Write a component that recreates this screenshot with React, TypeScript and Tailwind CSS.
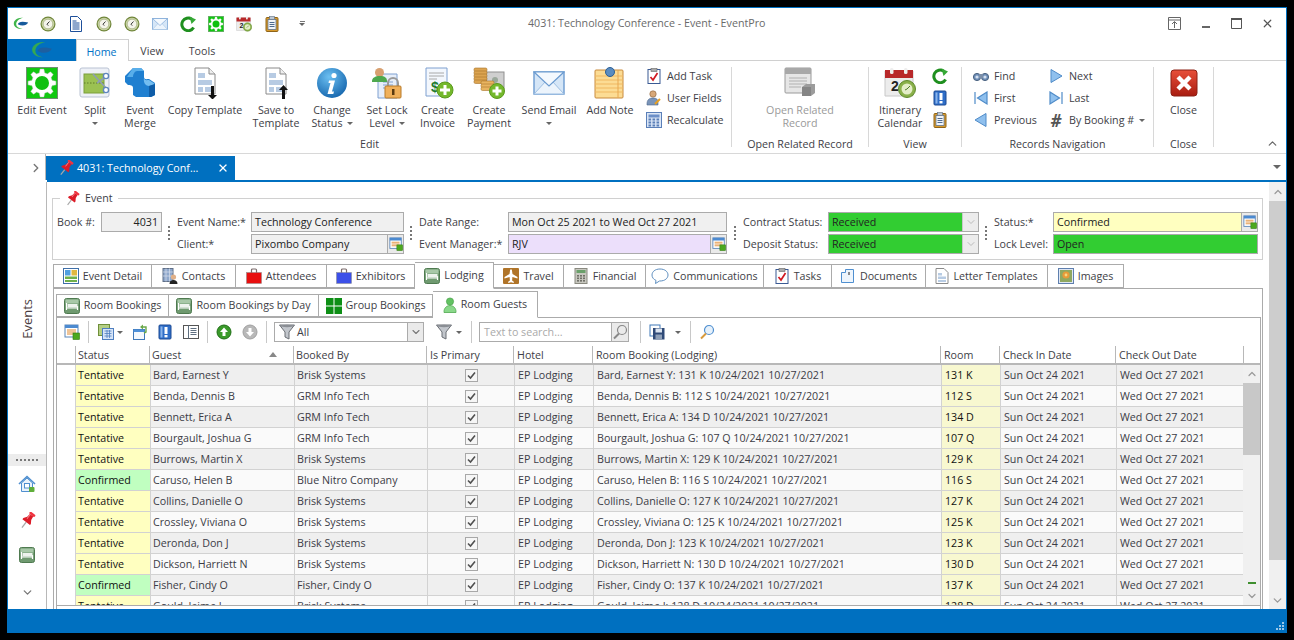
import type { ReactNode } from 'react';
import { ChevronDown, ChevronUp, ChevronRight, X } from 'lucide-react';

type IconProps = { size?: number; className?: string };

function gearPath(cx: number, cy: number, outer: number, inner: number, teeth: number) {
  const pts: string[] = [];
  const step = (Math.PI * 2) / teeth;
  for (let i = 0; i < teeth; i++) {
    const a = i * step;
    const corners: [number, number][] = [
      [a - step * 0.32, inner],
      [a - step * 0.17, outer],
      [a + step * 0.17, outer],
      [a + step * 0.32, inner],
    ];
    corners.forEach(([t, r]) => pts.push(`${(cx + Math.cos(t) * r).toFixed(2)},${(cy + Math.sin(t) * r).toFixed(2)}`));
  }
  return `M${pts.join('L')}Z`;
}

/* ---- drawn icons ---- */
const Logo = ({ size = 16, dim }: IconProps & { dim?: boolean }) => (
  <svg width={size} height={size * 0.8} viewBox="0 0 20 16">
    <path d="M13 1C6 0 1 4 1 8c0 4 4 7 11 7-5-1-8-3-8-6 0-4 4-7 9-8z" fill={dim ? '#35a853' : '#3fb54a'} />
    <path d="M6 9c1-3 5-4 13-2-2 4-8 5-13 2z" fill={dim ? '#1d5fa0' : '#155a9c'} />
  </svg>
);
const Clock = ({ size = 16 }: IconProps) => (
  <svg width={size} height={size} viewBox="0 0 16 16">
    <circle cx="8" cy="8" r="7.5" fill="#70863a" />
    <circle cx="8" cy="8" r="6.3" fill="#c9d3a6" />
    <circle cx="8" cy="8" r="4.8" fill="#f4f4ec" stroke="#8a9a5e" strokeWidth=".5" />
    <path d="M9.5 5.5 7 8.2l1.2 1.4" fill="none" stroke="#333" strokeWidth="1" />
  </svg>
);
const DocBlue = ({ size = 16 }: IconProps) => (
  <svg width={size} height={size} viewBox="0 0 16 16">
    <path d="M2.5.5h7l4 4v11h-11z" fill="#fff" stroke="#1d4f9a" />
    <path d="M4.5 5h4M4.5 7h7M4.5 9h7M4.5 11h7M4.5 13h7" stroke="#1d4f9a" />
  </svg>
);
const Mail = ({ size = 16 }: IconProps) => (
  <svg width={size} height={size} viewBox="0 0 32 32">
    <path d="M1 5h30v22H1z" fill="#d5e6f7" stroke="#6b9bd0" strokeWidth="1.4" />
    <path d="M1 27 13 14h6l12 13z" fill="#ecf4fc" stroke="#9dbfe3" />
    <path d="M1 5l15 14L31 5z" fill="#f4f9fe" stroke="#6b9bd0" strokeWidth="1.2" />
  </svg>
);
const Refresh = ({ size = 16 }: IconProps) => (
  <svg width={size} height={size} viewBox="0 0 16 16">
    <path d="M13.6 11.5A6.3 6.3 0 1 1 11.5 3" fill="none" stroke="#1f8f1f" strokeWidth="3" />
    <path d="M9.5 0.5 16 3.5l-4.5 4.5z" fill="#35a835" />
  </svg>
);
const GearBox = ({ size = 16 }: IconProps) => (
  <svg width={size} height={size} viewBox="0 0 32 32">
    <rect x=".5" y=".5" width="31" height="31" fill="#10c810" stroke="#6f8f6f" />
    <path d={gearPath(16, 16, 14, 10.5, 8)} fill="#fff" stroke="#cfcfcf" strokeWidth=".5" />
    <circle cx="16" cy="16" r="7" fill="#10c010" />
  </svg>
);
const CalIcon = ({ size = 32 }: IconProps) => (
  <svg width={size} height={size} viewBox="0 0 32 32" fontFamily="'Liberation Sans',sans-serif">
    <path d="M1 4h28v25H1z" fill="#ececec" stroke="#c8c8c8" />
    <path d="M1 3h28v8H1z" fill="#b8282a" />
    <rect x="6" y="1" width="3.5" height="6" rx="1.5" fill="#eee" />
    <rect x="20" y="1" width="3.5" height="6" rx="1.5" fill="#eee" />
    <text x="7" y="24" fontSize="14" fontWeight="700" fill="#222">2</text>
    <circle cx="23" cy="22" r="8.5" fill="#8ab04a" stroke="#5f8a2c" />
    <circle cx="23" cy="22" r="5.5" fill="#e4edc8" />
    <path d="M26 19l-3 3-2 1" stroke="#4f7a2c" fill="none" />
  </svg>
);
const Clipboard = ({ size = 16 }: IconProps) => (
  <svg width={size} height={size} viewBox="0 0 16 16">
    <rect x="2" y="1.5" width="12" height="14" rx="1" fill="#d89a2c" stroke="#8f6418" />
    <rect x="4" y="3.5" width="8" height="10" fill="#f1f4f8" stroke="#4d6a8f" strokeWidth=".7" />
    <rect x="5.5" y=".5" width="5" height="3" fill="#bcc7d4" stroke="#5f6f80" strokeWidth=".6" />
    <path d="M5.5 6.5h5M5.5 8.5h5M5.5 10.5h5" stroke="#4d6a8f" />
  </svg>
);
const Pin = ({ size = 16 }: IconProps) => (
  <svg width={size} height={size} viewBox="0 0 16 16">
    <g transform="rotate(38 8 8)">
      <path d="M8 10v6.5" stroke="#a8a8a8" strokeWidth="1.2" />
      <rect x="4.8" y="-.6" width="6.4" height="2.4" rx="1" fill="#f03440" />
      <path d="M6 1.8h4l.4 3.6 2.1 3.2V10h-9V8.6l2.1-3.2z" fill="#dc1c28" />
      <path d="M6.6 2v5" stroke="#f6868c" strokeWidth=".9" />
    </g>
  </svg>
);
const Bed = ({ size = 16 }: IconProps) => (
  <svg width={size} height={size} viewBox="0 0 16 16">
    <rect x=".5" y=".5" width="15" height="15" rx="2" fill="#6f9a70" stroke="#4f7a50" />
    <rect x="1.5" y="1.5" width="13" height="4" fill="#a8c8a8" />
    <path d="M2.5 5v7M13.5 8v4M2.5 10h11" stroke="#fff" strokeWidth="1.2" />
    <rect x="3.5" y="6" width="10" height="3.5" fill="#eef3ee" />
  </svg>
);
const SelectBox = ({ size = 16 }: IconProps) => (
  <svg width={size} height={size} viewBox="0 0 16 16">
    <rect x="1" y="1" width="13" height="12" fill="#fff" stroke="#5b86b8" />
    <rect x="1" y="1" width="13" height="3" fill="#4c8ad0" />
    <path d="M3 6h9M3 8h9M3 10h6" stroke="#e08a30" />
    <rect x="9" y="9" width="6.5" height="6.5" fill="#4ca81e" stroke="#2f7a10" strokeWidth=".6" />
  </svg>
);
const Split = () => (
  <svg width="32" height="32" viewBox="0 0 32 32">
    <rect x="1" y="1" width="29" height="29" rx="2" fill="#eef1f7" stroke="#b9c2d3" />
    <rect x="5" y="7" width="20" height="19" fill="#9bc152" stroke="#7b9f3a" />
    <path d="M5 16h20" stroke="#5e7d2a" strokeDasharray="1.5 1.5" />
    <path d="M14 7l14 15M28 9 18 16" stroke="#8d9db5" strokeWidth="1.6" />
    <circle cx="27" cy="9" r="2.6" fill="#fff" stroke="#5f86bd" strokeWidth="1.4" />
    <circle cx="27" cy="23" r="2.6" fill="#fff" stroke="#5f86bd" strokeWidth="1.4" />
  </svg>
);
const Merge = () => (
  <svg width="32" height="32" viewBox="0 0 32 32">
    <path d="M1 9 9 1h8l3 3v6c0 3 3 2 5 2l6 4v12l-4 2H12l-3-2v-7c0-3-3-3-5-3l-3-3z" fill="#1f7fd0" />
    <path d="M9 1h8l3 3H13c-2 0-4 3-4 6H3z" fill="#58aeea" />
    <path d="M20 11c1 3 3 2 5 2l6 4-6 2c-3 0-6-3-5-8z" fill="#74bdf0" />
    <path d="M25 19l6-2v11l-4 2h-2z" fill="#0f5da8" />
  </svg>
);
const Template = ({ dir }: { dir: 'down' | 'up' }) => (
  <svg width="32" height="32" viewBox="0 0 32 32">
    <path d="M6 1h14l6 6v20H6z" fill="#fff" stroke="#8a8a8a" />
    <path d="M20 1v6h6" fill="#eee" stroke="#8a8a8a" />
    <path d="M9 6h7v5H9zM9 13h14v5H9zM9 20h5v5H9zM16 20h7v5h-7z" fill="#b7cbe3" />
    {dir === 'down' ? (
      <path d="M22 19h3v9h3l-4.5 4.5L19 28h3z" fill="#111" />
    ) : (
      <path d="M22 32h3v-9h3l-4.5-5-4.5 5h3z" fill="#111" />
    )}
  </svg>
);
const Info = () => (
  <svg width="32" height="32" viewBox="0 0 32 32">
    <defs>
      <radialGradient id="ig" cx=".4" cy=".3" r=".8">
        <stop offset="0" stopColor="#6cc0f2" />
        <stop offset="1" stopColor="#0f5fa8" />
      </radialGradient>
    </defs>
    <circle cx="16" cy="16" r="15" fill="url(#ig)" />
    <circle cx="18" cy="8.5" r="2.6" fill="#fff" />
    <path d="M13 13.5h6l-3 11h2l-.7 2.5h-5.8l3-11h-2z" fill="#fff" />
  </svg>
);
const LockUser = () => (
  <svg width="32" height="32" viewBox="0 0 32 32">
    <path d="M7 7h19v24H7z" fill="#e6eefa" stroke="#7fa0d0" />
    <path d="M12 15h10M12 18h10M12 21h6" stroke="#7fa0d0" />
    <circle cx="8.5" cy="5.5" r="4.5" fill="#d8a070" />
    <path d="M1 14c0-3 3-5 8-5s7 2 7 5v1H1z" fill="#4ea84e" />
    <path d="M17 20v-4a5 5 0 0 1 10 0v4" fill="none" stroke="#9a9a9a" strokeWidth="2" />
    <rect x="14" y="19" width="16" height="12" rx="1" fill="#f0b05a" stroke="#b87a28" />
    <rect x="21" y="22" width="2.5" height="6" fill="#5a3a10" />
  </svg>
);
const Invoice = () => (
  <svg width="32" height="32" viewBox="0 0 32 32">
    <path d="M4 1h21v28H4z" fill="#f3f7fd" stroke="#7fa0d0" />
    <path d="M7 6h15M7 9h15M7 12h8" stroke="#a8a8a8" />
    <text x="9" y="25" fontSize="14" fontWeight="700" fill="#1c7a30" fontFamily="'Liberation Sans',sans-serif">$</text>
    <circle cx="23" cy="23" r="8" fill="#74b82c" stroke="#5a9a1c" />
    <path d="M23 18v10M18 23h10" stroke="#fff" strokeWidth="3" />
  </svg>
);
const Payment = () => (
  <svg width="32" height="32" viewBox="0 0 32 32">
    <rect x="13" y="5" width="18" height="17" fill="#cfcfcf" stroke="#8f8f8f" />
    <circle cx="22" cy="13" r="3" fill="#9aa89a" />
    {[3, 6, 9, 12, 15].map((y) => (
      <rect key={y} x="1" y={y - 2} width="13" height="3.5" rx="1.4" fill="#dca450" stroke="#a8742a" strokeWidth=".6" />
    ))}
    {[14, 17, 20].map((y) => (
      <rect key={y} x="8" y={y} width="13" height="3.5" rx="1.4" fill="#e8b460" stroke="#a8742a" strokeWidth=".6" />
    ))}
    <circle cx="24" cy="24" r="7.5" fill="#74b82c" stroke="#5a9a1c" />
    <path d="M24 19.5v9M19.5 24h9" stroke="#fff" strokeWidth="3" />
  </svg>
);
const Note = () => (
  <svg width="32" height="32" viewBox="0 0 32 32">
    <rect x="1" y="3" width="28" height="28" rx="1" fill="#fcdc94" stroke="#c88a3c" />
    <path d="M1 9h28M1 13h28M1 17h28M1 21h28M1 25h28" stroke="#f0b860" />
    <path d="M24 3v28" stroke="#e8a850" />
    <circle cx="16" cy="5" r="4.5" fill="#5a8cc0" stroke="#2c5f94" />
  </svg>
);
const Task = ({ size = 16 }: IconProps) => (
  <svg width={size} height={size} viewBox="0 0 16 16">
    <rect x="2" y="1.5" width="12" height="14" fill="#fff" stroke="#3a5a94" />
    <rect x="5" y=".5" width="6" height="3" fill="#aaa" stroke="#666" strokeWidth=".6" />
    <path d="M4.5 9l2.5 3 4.5-7" fill="none" stroke="#d01820" strokeWidth="1.7" />
  </svg>
);
const UserFields = () => (
  <svg width="16" height="16" viewBox="0 0 16 16">
    <circle cx="7" cy="4" r="3.2" fill="#d8a878" stroke="#8a6038" strokeWidth=".6" />
    <path d="M1 14c0-4 2-6 6-6s5 2 5 4v3H1z" fill="#7a94b8" stroke="#4a648c" strokeWidth=".6" />
    <path d="M9 14l5-5" stroke="#e8a020" strokeWidth="2" />
  </svg>
);
const Calc = ({ size = 16 }: IconProps) => (
  <svg width={size} height={size} viewBox="0 0 16 16">
    <rect x=".5" y=".5" width="15" height="15" fill="#dbe6f6" stroke="#5a7fb8" />
    <rect x="2.5" y="2.5" width="11" height="3" fill="#6c8fc8" />
    {[7, 10, 13].flatMap((y) =>
      [3, 7, 11].map((x) => <rect key={`${x}-${y}`} x={x - 0.5} y={y - 0.5} width="2.6" height="2" fill="#5a7fb8" />)
    )}
  </svg>
);
const RelatedRecord = () => (
  <svg width="32" height="32" viewBox="0 0 32 32">
    <rect x="1" y="1" width="26" height="25" rx="1" fill="#e6e6e6" stroke="#9a9a9a" />
    <rect x="1" y="1" width="26" height="6" fill="#a8a8a8" />
    <path d="M5 11h18M5 14h18M5 17h18M5 20h12" stroke="#b0b0b0" />
    <path d="M18 20l4-3h9v9l-4 3h-9z" fill="#9c9c9c" />
    <path d="M18 20h9v9h-9z" fill="#858585" />
  </svg>
);
const Book = ({ size = 16 }: IconProps) => (
  <svg width={size} height={size} viewBox="0 0 16 16">
    <rect x="2" y="1" width="12" height="14" rx="1" fill="#2f6ec8" stroke="#1c4a94" />
    <rect x="3.5" y="2.5" width="2" height="11" fill="#8ab4ea" />
    <rect x="7.5" y="3" width="3" height="7" fill="#fff" />
    <rect x="7.5" y="11" width="3" height="2.4" fill="#fff" />
  </svg>
);
const Binoc = () => (
  <svg width="16" height="16" viewBox="0 0 16 16">
    <circle cx="4" cy="9" r="3.6" fill="#6f8fb8" stroke="#49617f" />
    <circle cx="12" cy="9" r="3.6" fill="#6f8fb8" stroke="#49617f" />
    <rect x="6" y="6" width="4" height="4" fill="#7b8ea8" />
    <circle cx="4" cy="9" r="1.6" fill="#d5e0ef" />
    <circle cx="12" cy="9" r="1.6" fill="#d5e0ef" />
  </svg>
);
const Nav = ({ kind }: { kind: 'next' | 'prev' | 'first' | 'last' }) => (
  <svg width="16" height="16" viewBox="0 0 16 16">
    {kind === 'next' && <path d="M3 1.5 14 8 3 14.5z" fill="#8fc0ee" stroke="#4f8bc8" />}
    {kind === 'prev' && <path d="M13 1.5 2 8l11 6.5z" fill="#8fc0ee" stroke="#4f8bc8" />}
    {kind === 'first' && <path d="M2 2v12M14 2 4.5 8 14 14z" fill="#8fc0ee" stroke="#4f8bc8" strokeWidth="1.2" />}
    {kind === 'last' && <path d="M14 2v12M2 2l9.5 6L2 14z" fill="#8fc0ee" stroke="#4f8bc8" strokeWidth="1.2" />}
  </svg>
);
const CloseRed = () => (
  <svg width="32" height="32" viewBox="0 0 32 32">
    <defs>
      <linearGradient id="cr" x1="0" y1="0" x2="0" y2="1">
        <stop offset="0" stopColor="#e8503a" />
        <stop offset="1" stopColor="#a81c10" />
      </linearGradient>
    </defs>
    <rect x="3" y="3" width="26" height="26" rx="3" fill="url(#cr)" stroke="#8c2014" />
    <path d="M10 10l12 12M22 10 10 22" stroke="#fff" strokeWidth="4.4" />
  </svg>
);
const EventDetail = () => (
  <svg width="16" height="16" viewBox="0 0 16 16">
    <rect x=".5" y=".5" width="15" height="15" fill="#fff" stroke="#3f6fa8" />
    <rect x="2" y="2" width="5.5" height="5.5" fill="#4f9fe0" />
    <rect x="8.5" y="2" width="5.5" height="5.5" fill="#e0b840" />
    <rect x="2" y="8.5" width="12" height="2.5" fill="#6fb04a" />
    <rect x="2" y="12" width="12" height="2" fill="#6fb04a" />
  </svg>
);
const Contacts = () => (
  <svg width="16" height="16" viewBox="0 0 16 16">
    <rect x="1" y="0.5" width="10" height="13" fill="#8fa8cc" stroke="#5f6f88" />
    <path d="M4 .5v13M7.5 .5v13M1 4h10M1 8h10" stroke="#d8e0ec" strokeWidth=".7" />
    <circle cx="11.5" cy="9" r="2.6" fill="#e0b088" />
    <path d="M7.5 16c0-3 2-4 4-4s4 1 4 4z" fill="#222" />
  </svg>
);
const Badge = ({ color }: { color: string }) => (
  <svg width="16" height="16" viewBox="0 0 16 16">
    <rect x="5.5" y="1" width="5" height="5" rx="1" fill="none" stroke="#7a6a6a" strokeWidth="1.2" />
    <rect x="0.5" y="4.5" width="15" height="11" fill={color} stroke="#8a8a8a" strokeWidth=".5" />
  </svg>
);
const Plane = () => (
  <svg width="16" height="16" viewBox="0 0 16 16">
    <rect width="16" height="16" rx="1" fill="#b07428" />
    <path d="M7.2 1.5h1.6l.7 4.5 5 3v1.5L9.4 9l-.3 3.5 1.7 1.2V15L8 14.3 5.2 15v-1.3l1.7-1.2L6.6 9l-5.1 1.5V9l5-3z" fill="#fff" />
  </svg>
);
const Financial = () => (
  <svg width="16" height="16" viewBox="0 0 16 16">
    <rect x="2" y=".5" width="12" height="15" fill="#c8c8c0" stroke="#8a8a80" />
    <rect x="3.5" y="2" width="9" height="3" fill="#6aa06a" />
    {[7, 9.5, 12].flatMap((y) => [4, 7, 10].map((x) => <rect key={`${x}${y}`} x={x} y={y} width="2" height="1.6" fill="#707068" />))}
  </svg>
);
const Bubble = () => (
  <svg width="18" height="16" viewBox="0 0 18 16">
    <path d="M9 1C4 1 1 3.8 1 7c0 2.4 1.5 4.4 4 5.4L4.5 15.5 8.5 13h.5c5 0 8-2.8 8-6S14 1 9 1z" fill="#fff" stroke="#5f8fc0" />
  </svg>
);
const DocsIcon = () => (
  <svg width="16" height="16" viewBox="0 0 16 16">
    <path d="M1.5 4.5h4v-3h8v13h-12z" fill="#eef5fc" stroke="#4f8fd0" />
    <path d="M9 4v3" stroke="#444" strokeWidth="1.2" />
  </svg>
);
const LetterIcon = () => (
  <svg width="14" height="16" viewBox="0 0 14 16">
    <path d="M1 .5h8l4 4v11H1z" fill="#fff" stroke="#8a8a8a" />
    <path d="M3 5h4v2.5H3zM3 8.5h8V11H3zM3 12h8v2H3z" fill="#b7cbe3" />
  </svg>
);
const ImagesIcon = () => (
  <svg width="16" height="16" viewBox="0 0 16 16">
    <rect x=".5" y=".5" width="15" height="15" fill="#dfe7f4" stroke="#5f7fae" />
    <rect x="2" y="2" width="12" height="12" fill="#8fa860" />
    <circle cx="8" cy="7" r="3.6" fill="#e89a38" />
    <circle cx="8" cy="7" r="1.4" fill="#f4d880" />
  </svg>
);
const Person = () => (
  <svg width="14" height="16" viewBox="0 0 14 16">
    <circle cx="7" cy="4.5" r="3.6" fill="#62c262" stroke="#3f9a3f" strokeWidth=".6" />
    <path d="M1 14.5c0-3.2 2.5-6 6-6s6 2.8 6 6v1H1z" fill="#8ad88a" stroke="#4fa84f" strokeWidth=".8" />
  </svg>
);
const GroupGrid = () => (
  <svg width="16" height="16" viewBox="0 0 16 16">
    <rect width="16" height="16" fill="#fff" />
    <rect x="0" y="0" width="7.5" height="7.5" fill="#0e8f16" />
    <rect x="8.5" y="0" width="7.5" height="7.5" fill="#0e8f16" />
    <rect x="0" y="8.5" width="7.5" height="7.5" fill="#0e8f16" />
    <rect x="8.5" y="8.5" width="7.5" height="7.5" fill="#0e8f16" />
  </svg>
);
const Columns = () => (
  <svg width="16" height="16" viewBox="0 0 16 16">
    <rect x=".5" y=".5" width="11" height="11" fill="#b4cf84" stroke="#6f8f3a" />
    <rect x="4.5" y="4.5" width="11" height="11" fill="#d6e4f7" stroke="#4f7fc0" />
    <path d="M6.5 7h7M6.5 9.5h7M6.5 12h7M9 6v8M11.5 6v8" stroke="#4f7fc0" strokeWidth=".8" />
  </svg>
);
const Export = () => (
  <svg width="16" height="16" viewBox="0 0 16 16">
    <rect x=".5" y="5.5" width="11" height="10" fill="#f4f8fd" stroke="#3f78b8" />
    <rect x=".5" y="5.5" width="11" height="2.5" fill="#4f90d8" />
    <path d="M8 3h5v5l-2 1" fill="none" stroke="#6aa84a" strokeWidth="1.4" />
    <path d="M10 .5 7 3l3 2.5z" fill="#6aa84a" />
  </svg>
);
const PanelList = () => (
  <svg width="16" height="16" viewBox="0 0 16 16">
    <rect x=".5" y="1.5" width="15" height="13" fill="#fff" stroke="#555" />
    <path d="M5.5 1.5v13M7.5 4.5h6M7.5 6.5h6M7.5 8.5h6M7.5 10.5h6" stroke="#5f6f80" />
  </svg>
);
const Arrow = ({ up, on }: { up: boolean; on: boolean }) => (
  <svg width="16" height="16" viewBox="0 0 16 16">
    <circle cx="8" cy="8" r="7" fill={on ? '#3a9a2a' : '#b8b8b8'} stroke={on ? '#1f6f16' : '#a0a0a0'} />
    <path d={up ? 'M8 3.5 12 8H9.5v4h-3V8H4z' : 'M8 12.5 12 8H9.5V4h-3v4H4z'} fill="#fff" />
  </svg>
);
const Funnel = () => (
  <svg width="16" height="16" viewBox="0 0 16 16">
    <path d="M.5 1h15L10 8v7l-4-2V8z" fill="#c2c6cc" stroke="#6a6e74" />
    <ellipse cx="8" cy="2" rx="7" ry="1.2" fill="#8a8e94" />
  </svg>
);
const Floppy = () => (
  <svg width="16" height="16" viewBox="0 0 16 16">
    <rect x="1" y="1" width="10" height="11" fill="#fff" stroke="#3f78b8" />
    <rect x="4" y="4" width="11.5" height="11.5" fill="#2f4a78" />
    <rect x="6.5" y="4.5" width="6.5" height="4" fill="#dbe4f0" />
    <rect x="6.5" y="10.5" width="6.5" height="5" fill="#8fa0b8" />
  </svg>
);
const Search = ({ gray }: { gray?: boolean }) => (
  <svg width="16" height="16" viewBox="0 0 16 16">
    <circle cx="10" cy="6" r="4.5" fill={gray ? 'none' : '#e6f1fb'} stroke={gray ? '#888' : '#4f8fd0'} strokeWidth="1.2" />
    <path d="M7 9.5 2 14.5" stroke={gray ? '#888' : '#d89a3c'} strokeWidth="2" />
  </svg>
);
const HomeIcon = () => (
  <svg width="18" height="18" viewBox="0 0 18 18">
    <path d="M1 9 9 1.5 17 9" fill="none" stroke="#4f8fd0" strokeWidth="1.6" />
    <path d="M3.5 8v8.5h11V8L9 3z" fill="#eaf2fb" stroke="#4f8fd0" />
    <rect x="6.5" y="8.5" width="5" height="4.5" fill="#fff" stroke="#4f8fd0" />
    <rect x="11" y="12" width="5.5" height="5" rx="1" fill="#5fae3a" />
  </svg>
);

const Caret = ({ className = '' }: { className?: string }) => (
  <span className={`inline-block w-0 h-0 border-x-[3px] border-x-transparent border-t-[3px] border-t-[#666] ${className}`} />
);

/* ---- ribbon ---- */
function RibbonBtn({ w, icon, lines, caret, faded, inlineCaret }: { w: string; icon: ReactNode; lines: string[]; caret?: boolean; faded?: boolean; inlineCaret?: boolean }) {
  return (
    <div className={`${w} shrink-0 flex flex-col items-center leading-[13px] ${faded ? 'text-[#9a9a9a]' : ''}`}>
      <div className="h-[32px] flex items-center justify-center mb-[5px]">{icon}</div>
      {lines.map((l, i) => (
        <div key={l} className="whitespace-nowrap h-[13px]">
          {l}
          {inlineCaret && i === 1 && <Caret className="ml-[4px] mb-[2px]" />}
        </div>
      ))}
      {caret && <Caret className="mt-[5px]" />}
    </div>
  );
}

function SmallBtn({ icon, label, caret }: { icon: ReactNode; label: string; caret?: boolean }) {
  return (
    <div className="h-[22px] flex items-center whitespace-nowrap">
      <span className="w-[16px] h-[16px] mr-[5px] flex items-center justify-center">{icon}</span>
      {label}
      {caret && <Caret className="ml-[5px]" />}
    </div>
  );
}

function Group({ w, label, children, sep = true }: { w: string; label: string; children: ReactNode; sep?: boolean }) {
  return (
    <div className={`${w} shrink-0 h-[80px] flex flex-col ${sep ? 'border-r border-[#d8d8d8]' : ''}`}>
      <div className="h-[64px] shrink-0 flex">{children}</div>
      <div className="mt-[7px] h-[13px] shrink-0 text-center leading-[13px] whitespace-nowrap">{label}</div>
    </div>
  );
}

/* ---- form ---- */
const Dots = () => (
  <div className="flex flex-col items-center justify-center gap-[1px] row-span-2 pr-[1px]">
    {[0, 1, 2, 3].map((d) => (
      <span key={d} className="w-[2px] h-[2px] bg-[#777] mb-[1px]" />
    ))}
  </div>
);

function Field({ value, bg = 'bg-[#f0f0f0]', btn, combo, right }: { value: string; bg?: string; btn?: boolean; combo?: boolean; right?: boolean }) {
  return (
    <div className={`${bg} h-[20px] border border-[#ababab] flex items-stretch`}>
      <div className={`flex-1 pl-[3px] pr-[3px] leading-[18px] text-[#222] whitespace-nowrap overflow-hidden ${right ? 'text-right' : ''}`}>{value}</div>
      {btn && (
        <div className="w-[16px] bg-[#eaeaea] border-l border-[#ababab] flex items-center justify-center">
          <SelectBox size={14} />
        </div>
      )}
      {combo && (
        <div className="w-[16px] bg-[#ececec] border-l border-[#c8c8c8] flex items-center justify-center">
          <ChevronDown size={12} strokeWidth={2} className="text-[#bbb]" />
        </div>
      )}
    </div>
  );
}

/* ---- tabs ---- */
const mainTabs: { label: string; w: string; icon: ReactNode; active?: boolean }[] = [
  { label: 'Event Detail', w: 'w-[99px]', icon: <EventDetail /> },
  { label: 'Contacts', w: 'w-[84px]', icon: <Contacts /> },
  { label: 'Attendees', w: 'w-[91px]', icon: <Badge color="#e80f0f" /> },
  { label: 'Exhibitors', w: 'w-[88px]', icon: <Badge color="#3c50e8" /> },
  { label: 'Lodging', w: 'w-[79px]', icon: <Bed />, active: true },
  { label: 'Travel', w: 'w-[70px]', icon: <Plane /> },
  { label: 'Financial', w: 'w-[82px]', icon: <Financial /> },
  { label: 'Communications', w: 'w-[118px]', icon: <Bubble /> },
  { label: 'Tasks', w: 'w-[68px]', icon: <Task /> },
  { label: 'Documents', w: 'w-[94px]', icon: <DocsIcon /> },
  { label: 'Letter Templates', w: 'w-[122px]', icon: <LetterIcon /> },
  { label: 'Images', w: 'w-[76px]', icon: <ImagesIcon /> },
];

const subTabs: { label: string; w: string; icon: ReactNode; active?: boolean }[] = [
  { label: 'Room Bookings', w: 'w-[113px]', icon: <Bed /> },
  { label: 'Room Bookings by Day', w: 'w-[150px]', icon: <Bed /> },
  { label: 'Group Bookings', w: 'w-[114px]', icon: <GroupGrid /> },
  { label: 'Room Guests', w: 'w-[105px]', icon: <Person />, active: true },
];

function TabItem({ label, w, icon, active, h, activeH }: { label: string; w: string; icon: ReactNode; active?: boolean; h: string; activeH: string }) {
  return (
    <div
      className={`${w} ${active ? `${activeH} bg-white border-b-white z-10 mb-[-1px]` : `${h} bg-white`} shrink-0 border border-[#ababab] border-l-0 first:border-l flex items-center justify-center gap-[4px] whitespace-nowrap`}
    >
      {icon}
      {label}
    </div>
  );
}

/* ---- grid ---- */
const colClass = {
  status: 'w-[75px] pl-[2px]',
  guest: 'w-[144px] pl-[2px]',
  booked: 'w-[133px] pl-[2px]',
  primary: 'w-[87px]',
  hotel: 'w-[79px] pl-[3px]',
  booking: 'w-[348px] pl-[3px]',
  room: 'w-[59px] pl-[3px]',
  checkin: 'w-[116px] pl-[3px]',
  checkout: 'w-[128px] pl-[3px]',
};

type Guest = [string, string, string, boolean?];
const guests: Guest[] = [
  ['Bard, Earnest Y', 'Brisk Systems', '131 K'],
  ['Benda, Dennis B', 'GRM Info Tech', '112 S'],
  ['Bennett, Erica A', 'GRM Info Tech', '134 D'],
  ['Bourgault, Joshua G', 'GRM Info Tech', '107 Q'],
  ['Burrows, Martin X', 'Brisk Systems', '129 K'],
  ['Caruso, Helen B', 'Blue Nitro Company', '116 S', true],
  ['Collins, Danielle O', 'Brisk Systems', '127 K'],
  ['Crossley, Viviana O', 'Brisk Systems', '125 K'],
  ['Deronda, Don J', 'Brisk Systems', '123 K'],
  ['Dickson, Harriett N', 'Brisk Systems', '130 D'],
  ['Fisher, Cindy O', 'Fisher, Cindy O', '137 K', true],
  ['Gould, Jaime J', 'Brisk Systems', '128 D'],
];

const HeaderCell = ({ cls, children }: { cls: string; children?: ReactNode }) => (
  <div className={`${cls} shrink-0 border-r border-[#b8b8b8] leading-[18px] whitespace-nowrap relative`}>{children}</div>
);

function Row({ guest, booked, room, confirmed, idx }: { guest: string; booked: string; room: string; confirmed?: boolean; idx: number }) {
  const cell = 'shrink-0 border-r border-[#d2d2d2] leading-[20px] whitespace-nowrap text-[#3c3c46]';
  return (
    <div className={`h-[21px] flex border-b border-[#d2d2d2] ${idx % 2 === 0 ? 'bg-[#efefef]' : 'bg-[#fafafa]'}`}>
      <div className={`${cell} ${colClass.status} text-[#111] ${confirmed ? 'bg-[#c0ffc0]' : 'bg-[#ffffc0]'}`}>{confirmed ? 'Confirmed' : 'Tentative'}</div>
      <div className={`${cell} ${colClass.guest}`}>{guest}</div>
      <div className={`${cell} ${colClass.booked}`}>{booked}</div>
      <div className={`${cell} ${colClass.primary} flex items-center justify-center`}>
        <span className="w-[13px] h-[13px] border border-[#a8a8a8] bg-[#f6f6f6] flex items-center justify-center">
          <svg width="9" height="9" viewBox="0 0 9 9">
            <path d="M1 4.5 3.5 7 8 1.5" fill="none" stroke="#505050" strokeWidth="1.6" />
          </svg>
        </span>
      </div>
      <div className={`${cell} ${colClass.hotel}`}>EP Lodging</div>
      <div className={`${cell} ${colClass.booking}`}>{`${guest}: ${room} 10/24/2021 10/27/2021`}</div>
      <div className={`${cell} ${colClass.room} bg-[#f8f8d0] text-[#111]`}>{room}</div>
      <div className={`${cell} ${colClass.checkin}`}>Sun Oct 24 2021</div>
      <div className={`${cell} ${colClass.checkout} border-r-0`}>Wed Oct 27 2021</div>
    </div>
  );
}

const ToolSep = ({ ml, mr }: { ml: string; mr: string }) => <span className={`${ml} ${mr} w-px h-[22px] bg-[#c8c8c8] shrink-0`} />;

export default function App() {
  return (
    <div
      className="w-[1294px] h-[640px] bg-black p-[7px] overflow-hidden text-[10.7px] text-[#3e3e46]"
      style={{ fontFamily: "'Open Sans','Noto Sans',sans-serif" }}
    >
      <div className="w-[1280px] h-[626px] flex flex-col bg-white border-x border-t border-[#0070c0]">
        {/* title bar */}
        <div className="h-[31px] shrink-0 flex items-center relative">
          <span className="ml-[5px] w-[16px] flex items-center justify-center"><Logo size={16} /></span>
          <span className="ml-[11px]"><Clock /></span>
          <span className="ml-[12px]"><DocBlue /></span>
          <span className="ml-[12px]"><Clock /></span>
          <span className="ml-[12px]"><Clock /></span>
          <span className="ml-[12px]"><Mail /></span>
          <span className="ml-[12px]"><Refresh /></span>
          <span className="ml-[12px]"><GearBox /></span>
          <span className="ml-[12px]"><CalIcon size={16} /></span>
          <span className="ml-[12px]"><Clipboard /></span>
          <span className="ml-[19px] flex flex-col items-center gap-[1px]">
            <span className="w-[5px] h-px bg-[#777]" />
            <Caret />
          </span>
          <div className="ml-[223px] text-[#6a6a6a] whitespace-nowrap">4031: Technology Conference - Event - EventPro</div>
          <div className="absolute right-[12px] top-[9px] flex items-center text-[#555]">
            <svg width="13" height="13" viewBox="0 0 13 13" className="mr-[21px]">
              <path d="M.5.5h12v12H.5zM.5 3h12M6.5 11V5M4 7l2.5-2.5L9 7" fill="none" stroke="#666" />
            </svg>
            <span className="w-[8px] h-[2px] bg-[#666] mr-[21px] mt-[6px]" />
            <svg width="11" height="11" viewBox="0 0 11 11" className="mr-[19px]">
              <path d="M.5.5h10v10H.5z" fill="none" stroke="#555" />
              <path d="M0 1h11" stroke="#555" strokeWidth="2" />
            </svg>
            <X size={13} strokeWidth={2.2} />
          </div>
        </div>
        {/* ribbon tabs */}
        <div className="h-[22px] shrink-0 flex items-stretch border-b border-[#d0d0d0]">
          <div className="w-[68px] h-[22px] bg-[#0070c0] flex items-center justify-center"><Logo size={22} dim /></div>
          <div className="w-[53px] h-[22px] bg-white border border-b-0 border-[#d0d0d0] text-[#0072c6] flex items-center justify-center pt-[3px] pr-[2px]">Home</div>
          <div className="w-[46px] flex items-center justify-center pt-[3px]">View</div>
          <div className="w-[54px] flex items-center justify-center pt-[3px]">Tools</div>
        </div>
        {/* ribbon */}
        <div className="h-[93px] shrink-0 flex pt-[6px] border-b border-[#d8d8d8] relative">
          <Group w="w-[724px]" label="Edit">
            <div className="w-[4px] shrink-0" />
            <RibbonBtn w="w-[60px]" icon={<GearBox size={32} />} lines={['Edit Event']} />
            <RibbonBtn w="w-[46px]" icon={<Split />} lines={['Split']} caret />
            <RibbonBtn w="w-[44px]" icon={<Merge />} lines={['Event', 'Merge']} />
            <RibbonBtn w="w-[86px]" icon={<Template dir="down" />} lines={['Copy Template']} />
            <RibbonBtn w="w-[56px]" icon={<Template dir="up" />} lines={['Save to', 'Template']} />
            <RibbonBtn w="w-[56px]" icon={<Info />} lines={['Change', 'Status']} inlineCaret />
            <RibbonBtn w="w-[54px]" icon={<LockUser />} lines={['Set Lock', 'Level']} inlineCaret />
            <RibbonBtn w="w-[47px]" icon={<Invoice />} lines={['Create', 'Invoice']} />
            <RibbonBtn w="w-[56px]" icon={<Payment />} lines={['Create', 'Payment']} />
            <RibbonBtn w="w-[64px]" icon={<Mail size={32} />} lines={['Send Email']} caret />
            <RibbonBtn w="w-[58px]" icon={<Note />} lines={['Add Note']} />
            <div className="pl-[7px] -mt-[2px]">
              <SmallBtn icon={<Task />} label="Add Task" />
              <SmallBtn icon={<UserFields />} label="User Fields" />
              <SmallBtn icon={<Calc />} label="Recalculate" />
            </div>
          </Group>
          <Group w="w-[137px]" label="Open Related Record">
            <RibbonBtn w="w-full" icon={<RelatedRecord />} lines={['Open Related', 'Record']} faded />
          </Group>
          <Group w="w-[93px]" label="View">
            <RibbonBtn w="w-[62px]" icon={<CalIcon />} lines={['Itinerary', 'Calendar']} />
            <div className="w-[16px] -mt-[2px] ml-[1px]">
              <div className="h-[22px] flex items-center"><Refresh /></div>
              <div className="h-[22px] flex items-center"><Book /></div>
              <div className="h-[22px] flex items-center"><Clipboard /></div>
            </div>
          </Group>
          <Group w="w-[192px]" label="Records Navigation">
            <div className="pl-[11px] w-[86px] -mt-[2px]">
              <SmallBtn icon={<Binoc />} label="Find" />
              <SmallBtn icon={<Nav kind="first" />} label="First" />
              <SmallBtn icon={<Nav kind="prev" />} label="Previous" />
            </div>
            <div className="-mt-[2px]">
              <SmallBtn icon={<Nav kind="next" />} label="Next" />
              <SmallBtn icon={<Nav kind="last" />} label="Last" />
              <SmallBtn icon={<span className="text-[17px] font-bold italic leading-none text-[#555]">#</span>} label="By Booking #" caret />
            </div>
          </Group>
          <Group w="w-[60px]" label="Close">
            <RibbonBtn w="w-full" icon={<CloseRed />} lines={['Close']} />
          </Group>
          <ChevronUp size={13} strokeWidth={2.2} className="absolute right-[7px] bottom-[3px] text-[#666]" />
        </div>
        {/* document tab strip */}
        <div className="h-[28px] shrink-0 flex flex-col">
          <div className="h-[26px] flex items-stretch relative">
            <div className="w-[38px] border-r border-[#b8b8b8] flex items-center justify-end pr-[2px] pt-[2px] text-[#777]"><ChevronRight size={14} strokeWidth={2.4} /></div>
            <div className="w-[189px] mt-[2px] bg-[#0070c0] text-white flex items-center pl-[12px] whitespace-nowrap">
              <Pin />
              <span className="ml-[3px] w-[124px]">4031: Technology Conf...</span>
              <X size={12} strokeWidth={2.6} className="ml-[16px]" />
            </div>
            <div className="absolute right-[5px] top-[11px] flex"><Caret className="border-x-[4px] border-t-[4px]" /></div>
          </div>
          <div className="h-[2px] ml-[39px] bg-[#0070c0]" />
        </div>
        <div className="flex-1 min-h-0 flex">
          {/* left nav */}
          <div className="w-[39px] shrink-0 border-r border-[#b8b8b8] flex flex-col items-center relative">
            <div className="h-[272px] w-full flex items-center justify-center pl-[1px]">
              <span className="text-[13px] text-[#4a3c40] [writing-mode:vertical-rl] rotate-180 mt-[2px]">Events</span>
            </div>
            <div className="h-[12px] w-full bg-[#ececec] flex items-center justify-center gap-[2px]">
              {[0, 1, 2, 3, 4, 5].map((d) => (
                <span key={d} className="w-[2px] h-[2px] bg-[#777]" />
              ))}
            </div>
            <div className="mt-[9px] h-[18px]"><HomeIcon /></div>
            <div className="mt-[19px] h-[18px]"><Pin size={17} /></div>
            <div className="mt-[17px] h-[18px]"><Bed size={16} /></div>
            <ChevronDown size={13} strokeWidth={2.4} className="mt-[21px] text-[#777]" />
          </div>
          {/* page */}
          <div className="flex-1 min-w-0 flex flex-col overflow-hidden relative pl-[5px] pr-[6px]">
            {/* event box */}
            <div className="mt-[16px] w-[1211px] h-[62px] border border-[#d0d0d0] relative shrink-0 pt-[13px] pl-[4px]">
              <div className="absolute left-[7px] top-[-10px] bg-white px-[5px] h-[18px] flex items-center gap-[5px]">
                <Pin size={15} />
                <span>Event</span>
              </div>
              <div className="grid grid-cols-[44px_61px_15px_74px_153px_15px_89px_219px_16px_85px_151px_15px_59px_205px] grid-rows-[20px_20px] gap-y-[2px] leading-[20px] whitespace-nowrap">
                <div>Book #:</div>
                <Field value="4031" right />
                <Dots />
                <div>Event Name:*</div>
                <Field value="Technology Conference" />
                <Dots />
                <div>Date Range:</div>
                <Field value="Mon Oct 25 2021 to Wed Oct 27 2021" />
                <Dots />
                <div>Contract Status:</div>
                <Field bg="bg-[#32cd32]" value="Received" combo />
                <Dots />
                <div>Status:*</div>
                <Field bg="bg-[#ffffc0]" value="Confirmed" btn />
                <div className="col-start-4">Client:*</div>
                <Field value="Pixombo Company" btn />
                <div className="col-start-7">Event Manager:*</div>
                <Field bg="bg-[#ecdffb]" value="RJV" btn />
                <div className="col-start-10">Deposit Status:</div>
                <Field bg="bg-[#32cd32]" value="Received" combo />
                <div className="col-start-13">Lock Level:</div>
                <Field bg="bg-[#32cd32]" value="Open" />
              </div>
            </div>
            {/* main tabs */}
            <div className="mt-[1px] h-[27px] shrink-0 flex items-end ml-[1px] relative z-10">
              {mainTabs.map((t) => (
                <TabItem key={t.label} {...t} h="h-[24px]" activeH="h-[27px]" />
              ))}
            </div>
            <div className="ml-[1px] w-[1210px] flex-1 min-h-0 border-x border-t border-[#ababab] pl-[2px] pr-[2px] pt-[2px] flex flex-col">
              {/* sub tabs */}
              <div className="h-[26px] shrink-0 flex items-end relative z-10">
                {subTabs.map((t) => (
                  <TabItem key={t.label} {...t} h="h-[23px]" activeH="h-[27px]" />
                ))}
              </div>
              <div className="w-[1205px] border border-[#ababab] border-b-0 flex-1 min-h-0 flex flex-col">
                {/* toolbar */}
                <div className="h-[28px] shrink-0 flex items-center">
                  <span className="ml-[7px]"><SelectBox /></span>
                  <ToolSep ml="ml-[8px]" mr="mr-[9px]" />
                  <Columns />
                  <Caret className="ml-[3px]" />
                  <span className="ml-[10px]"><Export /></span>
                  <span className="ml-[8px]"><Book /></span>
                  <span className="ml-[10px]"><PanelList /></span>
                  <ToolSep ml="ml-[8px]" mr="mr-[8px]" />
                  <Arrow up on />
                  <span className="ml-[10px]"><Arrow up={false} on={false} /></span>
                  <ToolSep ml="ml-[8px]" mr="mr-[7px]" />
                  <div className="w-[150px] h-[20px] border border-[#ababab] flex items-center shrink-0">
                    <span className="ml-[4px]"><Funnel /></span>
                    <span className="ml-[2px] flex-1">All</span>
                    <span className="w-[16px] h-full bg-[#eaeaea] border-l border-[#ababab] flex items-center justify-center text-[#777]">
                      <ChevronDown size={12} strokeWidth={2.2} />
                    </span>
                  </div>
                  <span className="ml-[12px]"><Funnel /></span>
                  <Caret className="ml-[4px]" />
                  <ToolSep ml="ml-[9px]" mr="mr-[7px]" />
                  <div className="w-[150px] h-[20px] border border-[#ababab] flex items-center shrink-0">
                    <span className="flex-1 pl-[4px] text-[#aaa]">Text to search...</span>
                    <span className="w-[17px] h-full bg-[#eaeaea] border-l border-[#ababab] flex items-center justify-center"><Search gray /></span>
                  </div>
                  <ToolSep ml="ml-[11px]" mr="mr-[8px]" />
                  <Floppy />
                  <Caret className="ml-[10px]" />
                  <ToolSep ml="ml-[9px]" mr="mr-[8px]" />
                  <Search />
                </div>
                {/* header */}
                <div className="h-[19px] shrink-0 flex border-b-2 border-[#b8b8b8] pl-[18px]">
                  <HeaderCell cls={`${colClass.status} border-l`}>Status</HeaderCell>
                  <HeaderCell cls={colClass.guest}>
                    Guest
                    <span className="absolute right-[16px] top-[6px] w-0 h-0 border-x-[4px] border-x-transparent border-b-[5px] border-b-[#888]" />
                  </HeaderCell>
                  <HeaderCell cls={colClass.booked}>Booked By</HeaderCell>
                  <HeaderCell cls={`${colClass.primary} pl-[3px]`}>Is Primary</HeaderCell>
                  <HeaderCell cls={colClass.hotel}>Hotel</HeaderCell>
                  <HeaderCell cls={colClass.booking}>Room Booking (Lodging)</HeaderCell>
                  <HeaderCell cls={colClass.room}>Room</HeaderCell>
                  <HeaderCell cls={colClass.checkin}>Check In Date</HeaderCell>
                  <HeaderCell cls={colClass.checkout}>Check Out Date</HeaderCell>
                </div>
                {/* rows */}
                <div className="flex-1 min-h-0 flex overflow-hidden relative">
                  <div className="flex-1 min-w-0 pl-[18px] overflow-hidden">
                    <div className="border-l border-[#d2d2d2]">
                      {guests.map((g, i) => (
                        <Row key={g[0]} guest={g[0]} booked={g[1]} room={g[2]} confirmed={g[3]} idx={i} />
                      ))}
                    </div>
                  </div>
                  <div className="w-[17px] shrink-0 bg-[#f0f0f0] flex flex-col items-center relative">
                    <ChevronUp size={12} strokeWidth={2.4} className="mt-[3px] text-[#999]" />
                    <div className="w-full h-[72px] mt-[3px] bg-[#c8c8c8]" />
                    <div className="absolute left-[5px] bottom-[21px] w-[8px] h-[2px] bg-[#3f8f2f]" />
                    <ChevronDown size={12} strokeWidth={2.4} className="absolute bottom-[3px] text-[#999]" />
                  </div>
                </div>
                <div className="h-px shrink-0 bg-[#ababab]" />
                <div className="h-[3px] shrink-0" />
              </div>
            </div>
          </div>
          {/* outer scrollbar */}
          <div className="w-[17px] shrink-0 bg-[#f0f0f0] flex flex-col items-center relative">
            <div className="h-[19px] flex items-center"><ChevronUp size={12} strokeWidth={2.4} className="text-[#999]" /></div>
            <div className="w-full h-[359px] bg-[#cdcdcd]" />
            <ChevronDown size={13} strokeWidth={2.4} className="absolute bottom-[2px] text-[#999]" />
          </div>
        </div>
        {/* status bar */}
        <div className="h-[24px] shrink-0 bg-[#0070c0] relative">
          <svg width="9" height="9" viewBox="0 0 9 9" className="absolute right-[2px] bottom-[2px]">
            <path d="M7 0h2v2H7zM4 3h2v2H4zM7 3h2v2H7zM1 6h2v2H1zM4 6h2v2H4zM7 6h2v2H7z" fill="#9cc8e8" />
          </svg>
        </div>
      </div>
    </div>
  );
}
